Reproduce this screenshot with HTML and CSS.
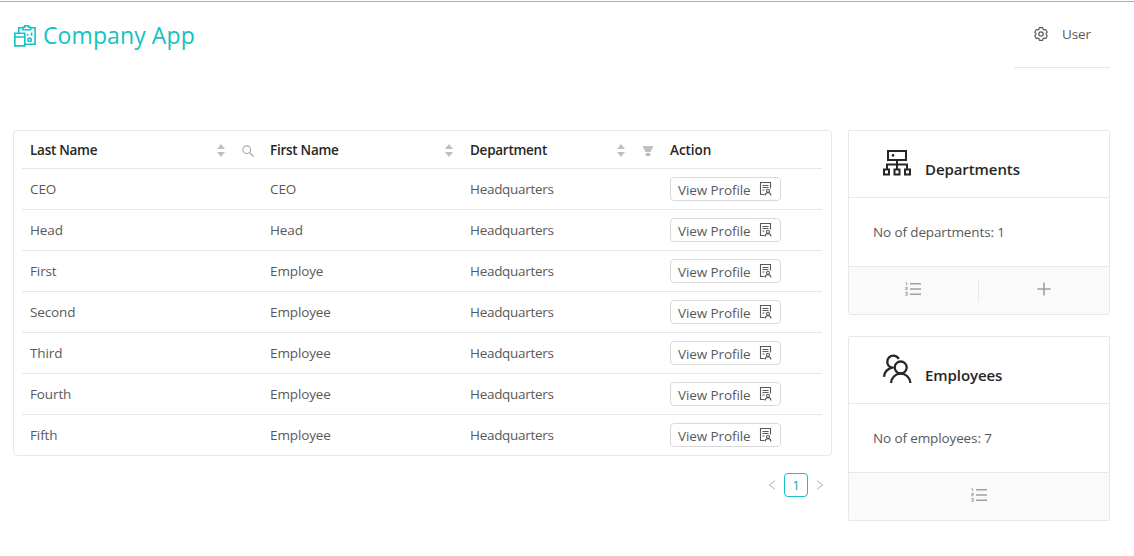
FILE: index.html
```html
<!DOCTYPE html>
<html lang="en">
<head>
<meta charset="utf-8">
<title>Company App</title>
<link rel="stylesheet" href="styles.css">
</head>
<body>
<svg class="sprite" aria-hidden="true">
  <symbol id="sort" viewBox="0 0 8 13"><path d="M4 0 8 5H0zM0 8h8l-4 5z"/></symbol>
  <symbol id="audit" viewBox="0 0 13 14"><g fill="none" stroke="currentColor" stroke-width="1.1"><path d="M5.500 12.500h-4v-12h10v6M3.500 3.500h6M3.500 5.500h6M3.500 8h2"/><circle cx="9" cy="8.800" r="1.500"/><path d="M6.200 13.600c0-1.800 1.200-3 2.800-3s2.900 1.200 2.900 3"/></g></symbol>
  <symbol id="list" viewBox="0 0 16 14"><path d="M5 1h11v1.600H5zM5 6.200h11v1.600H5zM5 11.400h11V13H5z"/><path d="M.5 .7h1.200v2.800M.3 5.400h2v1.200H.8v1.200h1.700M.3 10.500h2v2.800h-2M.8 11.900h1.500" fill="none" stroke="currentColor" stroke-width=".9"/></symbol>
</svg>
<header class="top">
  <div class="brand">
    <svg class="brand-icon" viewBox="0 0 22 22" fill="none" stroke="currentColor" stroke-width="1.600"><path d="M4.800 7.500V2.800h4M16.500 2.800h4.600v16.400h-9.600M8.800 4.800V2.200h2V.8h3.800v1.400h2v2.600zM.8 8.200h10v12.700H.8zM.8 12h10"/><circle cx="15.600" cy="14.800" r="1.700"/><path d="M13.600 8.700v2M17.600 7.500v3.200"/></svg>
    <span>Company App</span>
  </div>
  <nav class="user">
    <svg class="gear" viewBox="0 0 14 14" fill="none" stroke="currentColor" stroke-width="1.200" stroke-linejoin="round"><path d="M5.400.7h3.200l.5 1.600 1 .6 1.600-.4 1.600 2.700-1.200 1.200v1.200l1.200 1.200-1.600 2.700-1.600-.4-1 .6-.5 1.600H5.400l-.5-1.600-1-.6-1.600.4L.7 8.800l1.200-1.200V6.400L.7 5.200l1.600-2.700 1.600.4 1-.6z"/><circle cx="7" cy="7" r="2.200"/></svg>
    <span>User</span>
  </nav>
</header>
<main class="content">
  <section class="listing">
    <div class="table-box">
      <table>
        <colgroup><col class="c1"><col class="c2"><col class="c2"><col class="c3"></colgroup>
        <thead>
          <tr>
            <th><div class="head"><span>Last Name</span><svg class="sort"><use href="#sort"/></svg><svg class="tool search" viewBox="0 0 12 12" stroke="currentColor" stroke-width="1.100"><circle cx="4.700" cy="4.700" r="3.800"/><path d="m7.500 7.500 4 4"/></svg></div></th>
            <th><div class="head only-sort"><span>First Name</span><svg class="sort"><use href="#sort"/></svg></div></th>
            <th><div class="head"><span>Department</span><svg class="sort"><use href="#sort"/></svg><svg class="tool" viewBox="0 0 12 12"><path d="M.6 1h10.800L8.500 7h-5zM3.700 8h4.600v3H3.700z"/></svg></div></th>
            <th class="act">Action</th>
          </tr>
        </thead>
        <tbody>
          <tr><td>CEO</td><td>CEO</td><td class="dept">Headquarters</td><td><button><span>View Profile</span><svg><use href="#audit"/></svg></button></td></tr>
          <tr><td>Head</td><td>Head</td><td class="dept">Headquarters</td><td><button><span>View Profile</span><svg><use href="#audit"/></svg></button></td></tr>
          <tr><td>First</td><td>Employe</td><td class="dept">Headquarters</td><td><button><span>View Profile</span><svg><use href="#audit"/></svg></button></td></tr>
          <tr><td>Second</td><td>Employee</td><td class="dept">Headquarters</td><td><button><span>View Profile</span><svg><use href="#audit"/></svg></button></td></tr>
          <tr><td>Third</td><td>Employee</td><td class="dept">Headquarters</td><td><button><span>View Profile</span><svg><use href="#audit"/></svg></button></td></tr>
          <tr><td>Fourth</td><td>Employee</td><td class="dept">Headquarters</td><td><button><span>View Profile</span><svg><use href="#audit"/></svg></button></td></tr>
          <tr><td>Fifth</td><td>Employee</td><td class="dept">Headquarters</td><td><button><span>View Profile</span><svg><use href="#audit"/></svg></button></td></tr>
        </tbody>
      </table>
    </div>
    <div class="pager">
      <svg viewBox="0 0 8 10"><path d="M7 .8 1.200 5 7 9.200"/></svg>
      <span class="page">1</span>
      <svg viewBox="0 0 8 10"><path d="M1 .8 6.800 5 1 9.200"/></svg>
    </div>
  </section>
  <aside class="cards">
    <article class="card">
      <div class="card-head">
        <svg class="card-icon" viewBox="0 0 28 28" fill="none" stroke="currentColor" stroke-width="2"><path d="M5 2h18v9H5zM14 11v9M4 20v-4.500h20V20M1 20.500h5v5H1zM11.500 20.500h5v5h-5zM22 20.500h5v5h-5z"/><circle cx="10" cy="6.400" r="1.300" fill="currentColor" stroke="none"/></svg>
        <span>Departments</span>
      </div>
      <div class="card-body">No of departments: 1</div>
      <div class="actions">
        <div class="action first"><svg class="list"><use href="#list"/></svg></div>
        <div class="action split"><svg class="plus" viewBox="0 0 14 14"><path d="M7 .5v13M.3 7h13.400" stroke="currentColor" stroke-width="1.600"/></svg></div>
      </div>
    </article>
    <article class="card">
      <div class="card-head">
        <svg class="card-icon" viewBox="0 0 28 28" fill="none" stroke="currentColor" stroke-width="2.300"><circle cx="17.700" cy="12.500" r="6"/><path d="M8 28c.4-5.600 4.600-9.300 9.700-9.300s9.300 3.700 9.700 9.300M15.800 3.800C14.500 1.700 12.700.6 10.500.6 7 .6 4.300 3.300 4.300 6.700c0 2.800 1.700 5.200 4.700 6C4.500 13.900 1.400 17.400 1 21.800"/></svg>
        <span>Employees</span>
      </div>
      <div class="card-body">No of employees: 7</div>
      <div class="actions">
        <div class="action"><svg class="list"><use href="#list"/></svg></div>
      </div>
    </article>
  </aside>
</main>
</body>
</html>
```

FILE: styles.css
```css
* { box-sizing: border-box; }
body { margin: 0; height: 556px; overflow: hidden; background: #fff; color: #595959; font: 13.5px/20px "Open Sans", "Noto Sans", sans-serif; letter-spacing: -0.12px; border-top: 1px solid #fff; }
svg { display: block; flex: none; overflow: visible; }
.sprite { width: 0; height: 0; position: absolute; }
.top { height: 129px; border-top: 1px solid #adadad; display: flex; justify-content: space-between; align-items: flex-start; padding: 0 24px 0 14px; }
.brand { display: flex; align-items: center; gap: 7px; margin-top: 17px; height: 32px; color: #13c2c2; font-size: 23px; line-height: 32px; letter-spacing: 0.1px; }
.brand-icon { width: 22px; height: 22px; margin-top: 1px; }
.user { width: 96px; height: 66px; border-bottom: 1px solid #e8e8e8; display: flex; align-items: center; gap: 14px; padding: 0 20px 1px; }
.gear { width: 14px; height: 14px; }
.content { display: flex; align-items: flex-start; gap: 16px; padding: 0 24px 0 13px; }
.listing { width: 819px; }
.table-box { height: 326px; border: 1px solid #e8e8e8; border-radius: 4px; padding: 0 8px; }
table { width: 800px; border-collapse: separate; border-spacing: 0; table-layout: fixed; }
.c1 { width: 240px; }
.c2 { width: 200px; }
.c3 { width: 160px; }
th, td { height: 41px; padding: 0 8px; border-bottom: 1px solid #e8e8e8; text-align: left; }
th { height: 38px; color: #262626; font-weight: 600; letter-spacing: -0.27px; }
.act { letter-spacing: -0.05px; }
tbody tr:last-child td { height: 40px; border-bottom: 0; }
.dept { letter-spacing: -0.3px; }
.head { display: flex; align-items: center; }
.sort { width: 8px; height: 13px; margin-left: auto; margin-top: 1px; fill: #bfbfbf; }
.tool { width: 12px; height: 12px; margin-top: 2px; margin-left: 17px; fill: #bfbfbf; }
.search { fill: none; color: #a6a6a6; }
.only-sort { padding-right: 1px; }
button { width: 111px; height: 24px; display: flex; align-items: center; justify-content: space-between; padding: 1px 8px 0 7px; border: 1px solid #d9d9d9; border-radius: 4px; background: #fff; color: #595959; font: inherit; letter-spacing: -0.1px; }
button svg { width: 13px; height: 14px; margin-bottom: 1px; }
.pager { height: 24px; margin-top: 17px; padding-right: 8px; display: flex; align-items: center; justify-content: flex-end; gap: 8px; }
.pager svg { width: 8px; height: 10px; fill: none; stroke: #b5b5b5; }
.page { width: 24px; height: 24px; border: 1px solid #13c2c2; border-radius: 4px; color: #13a8a8; text-align: center; line-height: 22px; }
.cards { width: 262px; display: grid; gap: 21px; }
.card { height: 185px; border: 1px solid #e8e8e8; border-radius: 2px; display: flex; flex-direction: column; }
.card-head { height: 67px; border-bottom: 1px solid #e8e8e8; display: flex; align-items: flex-start; gap: 14px; padding: 18px 34px 0; color: #262626; font-size: 15px; font-weight: 600; letter-spacing: -0.08px; }
.card-head span { margin-top: 10px; }
.card-icon { width: 28px; height: 28px; }
.card-body { flex: 1; display: flex; align-items: center; padding: 0 24px 1px; }
.actions { height: 48px; flex: none; border-top: 1px solid #e8e8e8; background: #fafafa; display: flex; align-items: center; padding-bottom: 1px; }
.action { flex: 1; height: 23px; display: flex; align-items: center; justify-content: center; padding-bottom: 3px; color: #a0a0a0; fill: #a0a0a0; }
.first { padding-right: 2px; }
.split { flex: 0 0 131px; border-left: 1px solid #e8e8e8; }
.list { width: 16px; height: 14px; }
.plus { width: 14px; height: 14px; }
```
